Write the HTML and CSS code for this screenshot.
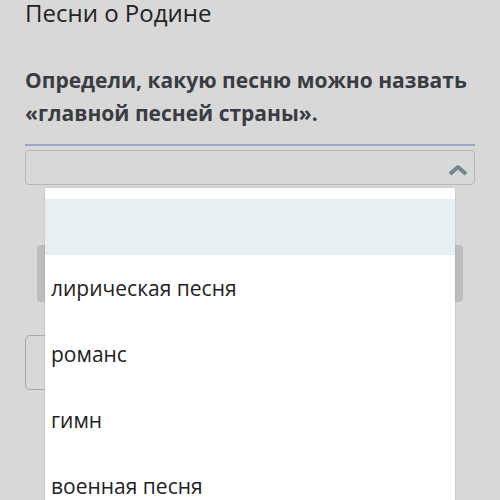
FILE: index.html
```html
<!DOCTYPE html>
<html lang="ru">
<head>
  <meta charset="UTF-8" />
  <title>Песни о Родине</title>
  <link rel="stylesheet" href="styles.css">
</head>
<body>
  <div class="page">
    <h1 class="title">Песни о Родине</h1>
    <p class="question">Определи, какую песню можно назвать «главной песней страны».</p>
    <div class="field">
      <div class="select">
        <svg class="chev" width="20" height="12" viewBox="0 0 20 12">
          <path d="M2 10 L10 3 L18 10" fill="none" stroke="#6e8a8f" stroke-width="4" stroke-linejoin="round"/>
        </svg>
      </div>
      <ul class="menu">
        <li class="active"></li>
        <li>лирическая песня</li>
        <li>романс</li>
        <li>гимн</li>
        <li>военная песня</li>
      </ul>
    </div>
    <div class="answer"></div>
    <div class="btn"></div>
  </div>
</body>
</html>
```

FILE: styles.css
```css
* {
  box-sizing: border-box;
}

body {
  margin: 0;
  background-color: #d8d8d8;
  font-family: "Open Sans", "Noto Sans", sans-serif;
  color: #222;
}

.page {
  padding: 0 25px;
  height: 500px;
  overflow: hidden;
}

.title {
  margin: -2px 0 0;
  font-size: 24px;
  font-weight: 400;
  line-height: 30px;
}

.question {
  margin: 36px 0 0;
  font-size: 21px;
  font-weight: 700;
  line-height: 33px;
  color: #3a3c42;
}

.field {
  position: relative;
  margin-top: 14px;
  border-top: 2px solid #9aa7c6;
  padding-top: 4px;
}

.select {
  height: 35px;
  border: 1px solid #b8b8b8;
  border-radius: 4px;
  display: flex;
  align-items: center;
  justify-content: flex-end;
  padding-right: 6px;
  padding-top: 4px;
}

.menu {
  position: absolute;
  top: 42px;
  left: 20px;
  right: 20px;
  margin: 0;
  padding: 11px 0 0;
  list-style: none;
  background: #fff;
  box-shadow: 0 0 2px rgba(0, 0, 0, 0.15);
  height: 320px;
  overflow: hidden;
  z-index: 2;
}

.menu li {
  height: 66px;
  display: flex;
  align-items: center;
  padding-left: 6px;
  font-size: 21px;
}

.menu li.active {
  height: 56px;
  background: #e8eff2;
}

.answer {
  margin: 60px 12px 0;
  height: 57px;
  background: #bdbdbd;
  border-radius: 4px;
}

.btn {
  margin-top: 33px;
  width: 120px;
  height: 55px;
  border: 1px solid #a8a8a8;
  border-radius: 5px;
}
```
